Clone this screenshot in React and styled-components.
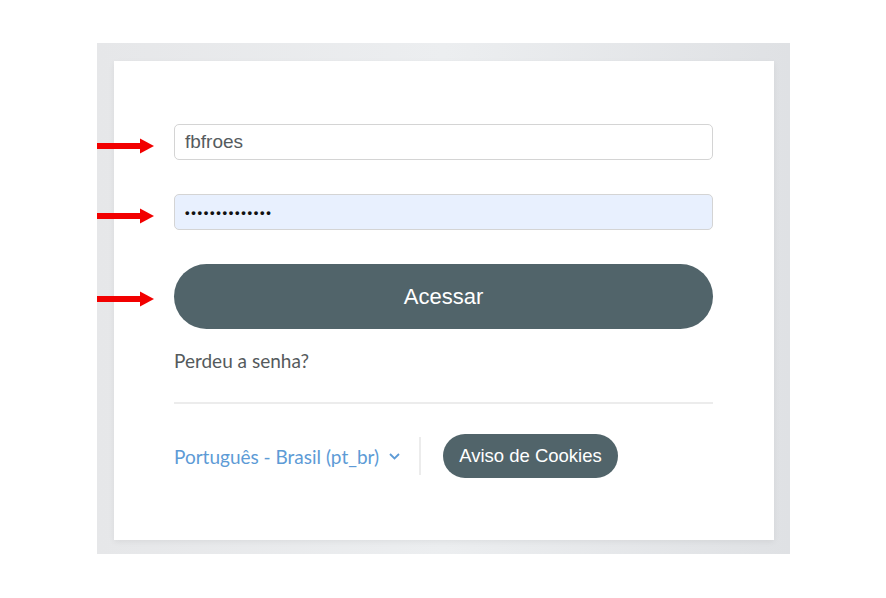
import styled, { createGlobalStyle } from 'styled-components'

const Global = createGlobalStyle`
  body {
    margin: 0;
    background: #ffffff;
    font-family: "Liberation Sans", Arial, sans-serif;
  }
`

const Page = styled.div`
  width: 886px;
  height: 598px;
  padding: 43px 0 0 97px;
  box-sizing: border-box;
`

const Frame = styled.div`
  width: 693px;
  height: 511px;
  box-sizing: border-box;
  padding: 18px 16px 14px 17px;
  background: linear-gradient(90deg, #e6e7e9 0%, #eceef0 50%, #dfe1e4 100%);
  display: flex;
`

const Card = styled.div`
  flex: 1;
  background: #ffffff;
  padding: 63px 61px 0 60px;
  display: flex;
  flex-direction: column;
  box-shadow: 0 2px 6px rgba(0, 0, 0, 0.06);
`

const Row = styled.div`
  position: relative;
  margin-top: ${p => p.$top || 0}px;
`

const Arrow = styled.svg`
  position: absolute;
  left: -77px;
  top: calc(50% + ${p => p.$shift}px);
  transform: translateY(-50%);
`

const Field = styled.div`
  height: 36px;
  box-sizing: border-box;
  border: 1.5px solid #d4d4d4;
  border-radius: 5px;
  background: ${p => (p.$filled ? '#e8f0fe' : '#ffffff')};
  display: flex;
  align-items: center;
  padding-left: 10px;
  font-size: 19px;
  color: #555b5e;
`

const Dots = styled.span`
  font-size: 13px;
  letter-spacing: 1.7px;
  color: #111;
  font-weight: bold;
`

const Submit = styled.div`
  height: 65px;
  border-radius: 33px;
  background: #51646a;
  color: #ffffff;
  font-size: 22px;
  display: flex;
  align-items: center;
  justify-content: center;
`

const Lost = styled.div`
  margin-top: 20px;
  font-family: Lato, "Liberation Sans", sans-serif;
  font-size: 19px;
  line-height: 24px;
  color: #555a5c;
`

const Divider = styled.div`
  margin-top: 29px;
  height: 2px;
  background: #ececec;
`

const Bottom = styled.div`
  margin-top: 30px;
  display: flex;
  align-items: center;
  height: 44px;
`

const Lang = styled.div`
  font-family: Lato, "Liberation Sans", sans-serif;
  font-size: 19px;
  color: #5d9bd6;
  display: flex;
  align-items: center;
  gap: 10px;
`

const VLine = styled.div`
  width: 2px;
  height: 38px;
  background: #ececec;
  margin: 0 22px 0 19px;
`

const Pill = styled.div`
  height: 44px;
  padding: 0 16px;
  border-radius: 22px;
  background: #51646a;
  color: #ffffff;
  font-size: 18.5px;
  display: flex;
  align-items: center;
`

const RedArrow = ({ shift = 0 }) => (
  <Arrow $shift={shift} width="57" height="16" viewBox="0 0 57 16">
    <rect x="0" y="5" width="46" height="6" fill="#f20000" />
    <polygon points="43,0.5 57,8 43,15.5" fill="#f20000" />
  </Arrow>
)

const App = () => {
  return (
    <Page>
      <Global />
      <Frame>
        <Card>
          <Row>
            <RedArrow shift={4} />
            <Field>fbfroes</Field>
          </Row>
          <Row $top={34}>
            <RedArrow shift={4} />
            <Field $filled>
              <Dots>••••••••••••••</Dots>
            </Field>
          </Row>
          <Row $top={34}>
            <RedArrow shift={2} />
            <Submit>Acessar</Submit>
          </Row>
          <Lost>Perdeu a senha?</Lost>
          <Divider />
          <Bottom>
            <Lang>
              Português - Brasil (pt_br)
              <svg width="11" height="7" viewBox="0 0 11 7">
                <path d="M1 1 L5.5 5.5 L10 1" fill="none" stroke="#5d9bd6" strokeWidth="1.8" />
              </svg>
            </Lang>
            <VLine />
            <Pill>Aviso de Cookies</Pill>
          </Bottom>
        </Card>
      </Frame>
    </Page>
  )
}

export default App
